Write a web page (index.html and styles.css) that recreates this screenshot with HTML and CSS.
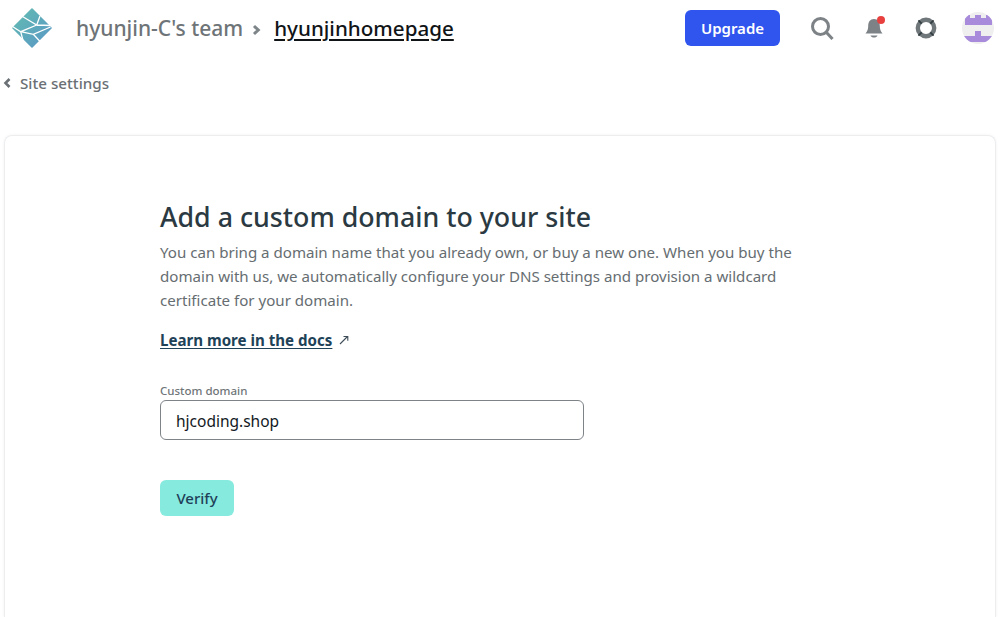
FILE: index.html
```html
<!DOCTYPE html>
<html lang="en">
<head>
<meta charset="utf-8">
<title>Add a custom domain</title>
<link rel="stylesheet" href="styles.css">
</head>
<body>
<header class="topbar">
  <div class="brand">
    <svg class="logo" width="40" height="40" viewBox="0 0 40 40" aria-hidden="true">
      <defs><linearGradient id="lg" x1="0" y1="0" x2="1" y2="1"><stop offset="0" stop-color="#62bdb1"/><stop offset="1" stop-color="#5a96c6"/></linearGradient></defs>
      <path d="M20 1 39 20 20 39 1 20Z" fill="url(#lg)" stroke="url(#lg)" stroke-linejoin="round" stroke-width="1.600"/>
      <path d="M10.500 8.500 24.700 17 28 8M24.700 17 38.500 17.500M24.700 17 8.700 23.700 0.500 18.500M8.700 23.700 21.300 26.300 38.500 19M21.300 26.300 28.500 34M8.700 23.700 11 32.500" fill="none" stroke="#fff" stroke-width="1.300"/>
    </svg>
    <nav class="crumbs">
      <a class="team">hyunjin-C's team</a>
      <svg class="sep" width="10" height="12" viewBox="0 0 10 12" aria-hidden="true"><path d="M3 2 7.300 6 3 10" fill="none" stroke="#7d8589" stroke-width="3"/></svg>
      <a class="site">hyunjinhomepage</a>
    </nav>
  </div>
  <div class="actions">
    <button class="upgrade">Upgrade</button>
    <svg class="ico-search" width="24" height="24" viewBox="0 0 24 24" aria-hidden="true"><circle cx="10.500" cy="10.500" r="8" fill="none" stroke="#7d8286" stroke-width="3"/><path d="M16.500 16.500 22.500 23" stroke="#7d8286" stroke-width="3"/></svg>
    <span class="bell">
      <svg width="20" height="24" viewBox="0 0 20 24" aria-hidden="true"><path d="M10 3C6 3 4.200 6 4.200 10 4.200 13 3.500 15 1.500 17.500H18.500C16.500 15 15.800 13 15.800 10 15.800 6 14 3 10 3Z" fill="#7d8286"/><path d="M6.500 19.500H13.500C12.500 22.200 7.500 22.200 6.500 19.500Z" fill="#7d8286"/></svg>
      <i class="dot"></i>
    </span>
    <svg class="ico-help" width="24" height="24" viewBox="0 0 24 24" aria-hidden="true"><circle cx="12" cy="12" r="8.200" fill="none" stroke="#70777a" stroke-width="4.400"/><path d="M4.400 4.400 7.700 7.700M19.600 4.400 16.300 7.700M4.400 19.600 7.700 16.300M19.600 19.600 16.300 16.300" stroke="#333e43" stroke-width="1.800"/></svg>
    <span class="avatar">
      <svg width="32" height="32" viewBox="0 0 32 32" aria-hidden="true"><path d="M3 3H8V6H13V3H19V6H24V3H30V13H3Z" fill="#a98bdc"/><path d="M13 19H19V24H32V30H0V24H13Z" fill="#a98bdc"/></svg>
    </span>
  </div>
</header>
<a class="back">
  <svg width="10" height="12" viewBox="0 0 10 12" aria-hidden="true"><path d="M7.500 2 3.500 6 7.500 10" fill="none" stroke="#6a7075" stroke-width="2.600"/></svg>
  Site settings
</a>
<main class="card">
  <section class="panel">
    <h1>Add a custom domain to your site</h1>
    <p class="lead">You can bring a domain name that you already own, or buy a new one. When you buy the domain with us, we automatically configure your DNS settings and provision a wildcard certificate for your domain.</p>
    <p class="docs"><a class="docs-link">Learn more in the docs</a> <svg width="10" height="10" viewBox="0 0 10 10" aria-hidden="true"><path d="M1 9 8.500 1.500M4.500 1.500H8.800V5.800" fill="none" stroke="#3f4e58" stroke-width="1.100"/></svg></p>
    <label class="field">
      <span class="field-label">Custom domain</span>
      <input class="field-input" type="text" value="hjcoding.shop">
    </label>
    <button class="verify">Verify</button>
  </section>
</main>
</body>
</html>
```

FILE: styles.css
```css
* { box-sizing: border-box; }
html, body { margin: 0; height: 100%; overflow: hidden; }
body { display: flex; flex-direction: column; background: #fff; font-family: "Noto Sans", "Open Sans", sans-serif; color: #2b3a42; width: 1007px; height: 617px; }
.topbar { display: flex; justify-content: space-between; align-items: center; height: 56px; padding: 0 13px 0 12px; flex: none; }
.brand { display: flex; align-items: center; gap: 24px; }
.logo { display: block; }
.crumbs { display: flex; align-items: center; gap: 8px; line-height: 28px; }
.team { color: #6e7477; font-size: 21px; font-weight: 500; }
.sep { margin-top: 3px; margin-right: 5px; }
.site { color: #101417; font-size: 20.600px; font-weight: 500; text-decoration: underline; text-decoration-thickness: 2px; text-underline-offset: 3px; }
.actions { display: flex; align-items: center; }
.upgrade { width: 95px; height: 36px; border: 0; border-radius: 6px; background: #2f55ee; color: #fff; font: 600 15px "Noto Sans", sans-serif; margin-right: 30px; padding-bottom: 2px; }
.ico-search { margin-right: 30px; }
.bell { position: relative; display: block; width: 20px; height: 24px; margin-right: 30px; }
.bell svg { display: block; }
.dot { position: absolute; top: 0; right: -1px; width: 8px; height: 8px; background: #e8403f; border-radius: 50%; }
.ico-help { margin-right: 24px; }
.avatar { width: 32px; height: 32px; border-radius: 50%; background: #efeff0; overflow: hidden; display: flex; align-items: center; justify-content: center; }
.back { display: flex; align-items: center; gap: 8px; margin: 15px 0 0 0; padding-left: 2px; color: #6a7075; font-size: 15.200px; font-weight: 500; line-height: 24px; flex: none; }
.card { flex: 1; margin: 40px 11px 0 4px; border: 1px solid #ebedef; border-bottom: 0; border-radius: 8px 8px 0 0; box-shadow: 0 0 3px rgba(30, 40, 50, .06); padding: 63px 0 0 155px; }
.panel { width: 640px; }
h1 { margin: 0; font-size: 26.750px; line-height: 36px; font-weight: 500; color: #2b3a42; }
.lead { margin: 5px 0 0; font-size: 15.100px; line-height: 24px; color: #666d71; }
.docs { margin: 16px 0 0; font-size: 15.100px; line-height: 24px; display: flex; align-items: center; gap: 7px; }
.docs-link { color: #1e4258; font-weight: 700; text-decoration: underline; text-underline-offset: 2px; }
.field { display: block; margin-top: 31px; }
.field-label { display: block; font-size: 11.500px; line-height: 16px; font-weight: 500; color: #6f7578; margin-bottom: 1px; }
.field-input { display: block; width: 424px; height: 40px; border: 1px solid #7e8387; border-radius: 6px; padding: 2px 15px 0; font: 400 15.500px "Noto Sans", sans-serif; color: #12191e; outline: 0; background: #fff; }
.verify { display: block; margin-top: 40px; width: 74px; height: 36px; border: 0; border-radius: 6px; background: #86eadf; color: #1f3f58; font: 500 15px "Noto Sans", sans-serif; }
```
